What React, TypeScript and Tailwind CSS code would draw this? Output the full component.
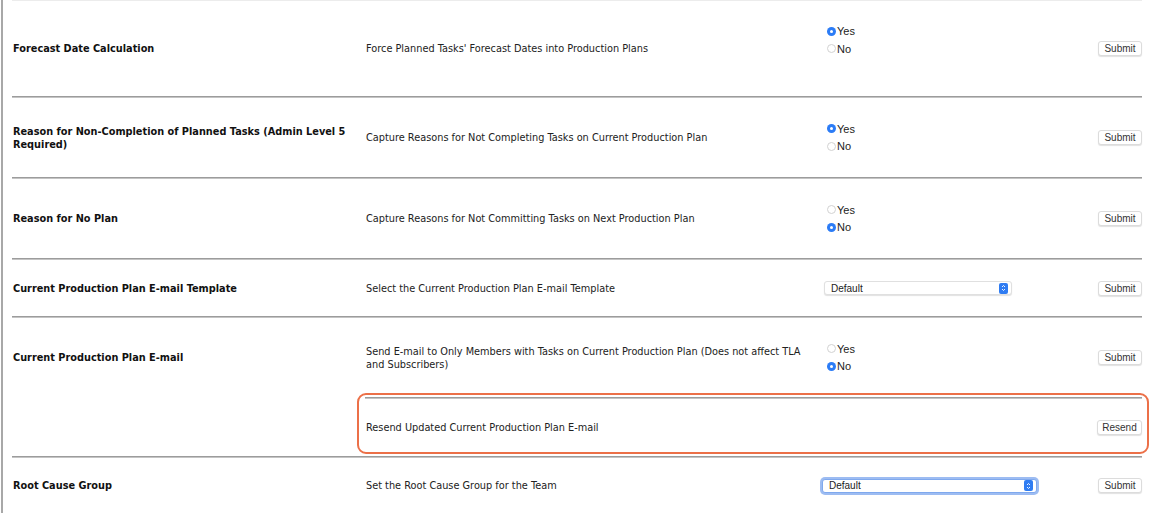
import React from "react";

const Line = ({ className = "" }: { className?: string }) => (
  <div className={"h-[2px] border-t border-[#9c9c9c] bg-[#c4c4c4] " + className} />
);

const Radio = ({ checked, label }: { checked: boolean; label: string }) => (
  <div className="flex items-center h-[17.5px]">
    {checked ? (
      <span className="w-[9px] h-[9px] rounded-full bg-[#2c7cf6] flex items-center justify-center">
        <span className="w-[3px] h-[3px] rounded-full bg-white" />
      </span>
    ) : (
      <span className="w-[9px] h-[9px] rounded-full border border-[#d2d2d2] bg-white" />
    )}
    <span className="ml-[1px] text-[11px] text-[#222] font-['Liberation_Sans',sans-serif]">{label}</span>
  </div>
);

const Btn = ({ label, w = "w-[44px]" }: { label: string; w?: string }) => (
  <div
    className={
      "h-[15px] " +
      w +
      " rounded-[3px] border border-[#dcdcdc] bg-white shadow-[0_1px_1px_rgba(0,0,0,0.12)] flex items-center justify-center text-[10px] text-[#333] font-['Liberation_Sans',sans-serif]"
    }
  >
    {label}
  </div>
);

const Stepper = () => (
  <span className="w-[9px] h-[11px] rounded-[2px] bg-[#2f7cf2] flex items-center justify-center">
    <svg width="5" height="8" viewBox="0 0 5 8">
      <path d="M1 3 L2.5 1.5 L4 3 M1 5 L2.5 6.5 L4 5" stroke="white" strokeWidth="0.9" fill="none" />
    </svg>
  </span>
);

const Select = ({ w, focused }: { w: string; focused?: boolean }) => (
  <div
    className={
      "h-[14px] " +
      w +
      " rounded-[3px] bg-white flex items-center justify-between pl-[6px] pr-[3px] text-[10px] text-[#222] font-['Liberation_Sans',sans-serif] " +
      (focused
        ? "border border-[#7fa9ee] ring-2 ring-[#9dbcf2]"
        : "border border-[#e0e0e0] shadow-[0_1px_1px_rgba(0,0,0,0.12)]")
    }
  >
    <span>Default</span>
    <Stepper />
  </div>
);

const Label = ({ children }: { children: React.ReactNode }) => (
  <div className="w-[353px] pr-[6px] pl-[1px] font-bold text-[9.75px] leading-[13px] text-[#111]">{children}</div>
);

const Desc = ({ children }: { children: React.ReactNode }) => (
  <div className="w-[459px] pl-[1px] pr-[10px] text-[9.75px] leading-[13px] text-[#222]">{children}</div>
);

const YesNo = ({ yes }: { yes: boolean }) => (
  <div className="flex flex-col">
    <Radio checked={yes} label="Yes" />
    <Radio checked={!yes} label="No" />
  </div>
);

export default function App() {
  return (
    <div className="w-[1170px] h-[521px] bg-white overflow-hidden font-['DejaVu_Sans',Verdana,sans-serif]">
      <div className="ml-[1px] w-[1160px] h-[513px] border-l-2 border-[#a8a8a8] pl-[9px]">
        <div className="w-[1130px]">
          <div className="h-[1px] bg-[#ececec]" />
          {/* Row 1 */}
          <div className="h-[95px] flex items-center">
            <Label>Forecast Date Calculation</Label>
            <Desc>Force Planned Tasks' Forecast Dates into Production Plans</Desc>
            <div className="flex-1 flex items-center justify-between pl-[3px]">
              <div className="-mt-[17px]"><YesNo yes={true} /></div>
              <Btn label="Submit" />
            </div>
          </div>
          <Line />
          {/* Row 2 */}
          <div className="h-[79px] flex items-center">
            <Label>Reason for Non-Completion of Planned Tasks (Admin Level 5 Required)</Label>
            <Desc>Capture Reasons for Not Completing Tasks on Current Production Plan</Desc>
            <div className="flex-1 flex items-center justify-between pl-[3px]">
              <YesNo yes={true} />
              <Btn label="Submit" />
            </div>
          </div>
          <Line />
          {/* Row 3 */}
          <div className="h-[79px] flex items-center">
            <Label>Reason for No Plan</Label>
            <Desc>Capture Reasons for Not Committing Tasks on Next Production Plan</Desc>
            <div className="flex-1 flex items-center justify-between pl-[3px]">
              <YesNo yes={false} />
              <Btn label="Submit" />
            </div>
          </div>
          <Line />
          {/* Row 4 */}
          <div className="h-[56px] flex items-center">
            <Label>Current Production Plan E-mail Template</Label>
            <Desc>Select the Current Production Plan E-mail Template</Desc>
            <div className="flex-1 flex items-center justify-between">
              <Select w="w-[188px]" />
              <Btn label="Submit" />
            </div>
          </div>
          <Line />
          {/* Row 5 + 6 */}
          <div className="flex">
            <div className="w-[353px] flex items-start">
              <div className="h-[79px] flex items-center">
                <Label>Current Production Plan E-mail</Label>
              </div>
            </div>
            <div className="flex-1 flex flex-col">
              <div className="h-[79px] flex items-center">
                <Desc>Send E-mail to Only Members with Tasks on Current Production Plan (Does not affect TLA and Subscribers)</Desc>
                <div className="flex-1 flex items-center justify-between pl-[3px]">
                  <YesNo yes={false} />
                  <Btn label="Submit" />
                </div>
              </div>
              <div className="relative">
                <div className="absolute -left-[8px] -top-[4px] w-[792px] h-[61px] rounded-[9px] border-2 border-[#ec7048]" />
                <Line />
                <div className="h-[57px] flex items-center">
                  <Desc>Resend Updated Current Production Plan E-mail</Desc>
                  <div className="flex-1 flex items-center justify-end">
                    <Btn label="Resend" w="w-[45px]" />
                  </div>
                </div>
              </div>
            </div>
          </div>
          <Line />
          {/* Row 7 */}
          <div className="h-[55px] flex items-center">
            <Label>Root Cause Group</Label>
            <Desc>Set the Root Cause Group for the Team</Desc>
            <div className="flex-1 flex items-center justify-between -ml-[2px]">
              <Select w="w-[215px]" focused />
              <Btn label="Submit" />
            </div>
          </div>
        </div>
      </div>
    </div>
  );
}
